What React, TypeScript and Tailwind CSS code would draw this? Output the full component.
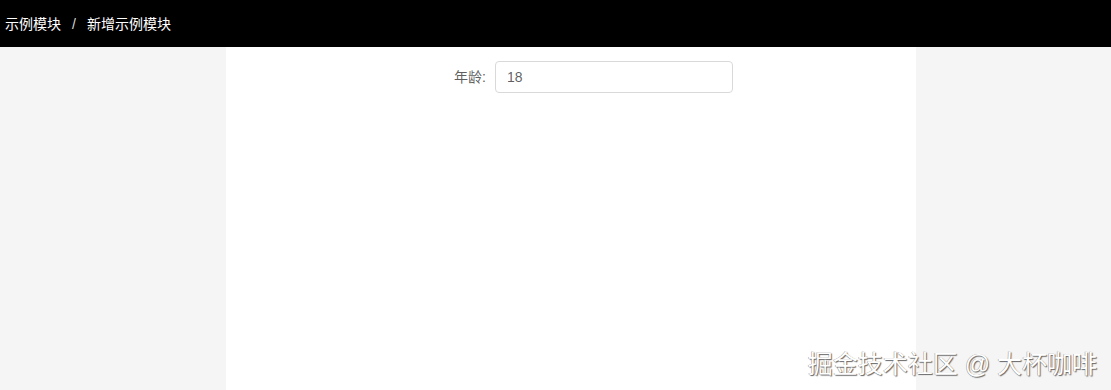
export default function App() {
  return (
    <div
      className="relative h-[390px] w-full overflow-hidden bg-[#f5f5f5] text-sm"
      style={{ fontFamily: '"Liberation Sans", "Noto Sans CJK SC", sans-serif' }}
    >
      <header className="flex h-[47px] items-center bg-black pl-[5px] text-white">
        <span>示例模块</span>
        <span className="mx-[11px] text-[#d9d9d9]">/</span>
        <span>新增示例模块</span>
      </header>
      <main className="ml-[226px] h-[343px] w-[690px] bg-white pt-[14px]">
        <div className="flex items-center">
          <label className="w-[261px] pr-[1px] text-right text-[rgba(0,0,0,0.65)]">年龄:</label>
          <input
            defaultValue="18"
            className="ml-[8px] h-[32px] w-[238px] rounded border border-[#d9d9d9] px-[11px] text-[rgba(0,0,0,0.65)] outline-none"
          />
        </div>
      </main>
      <div
        className="absolute bottom-[13px] right-[14px] text-[25px] leading-none text-white"
        style={{ textShadow: "1px 1px 1px #666, -0.5px -0.5px 0 #999" }}
      >
        掘金技术社区 @ 大杯咖啡
      </div>
    </div>
  );
}
